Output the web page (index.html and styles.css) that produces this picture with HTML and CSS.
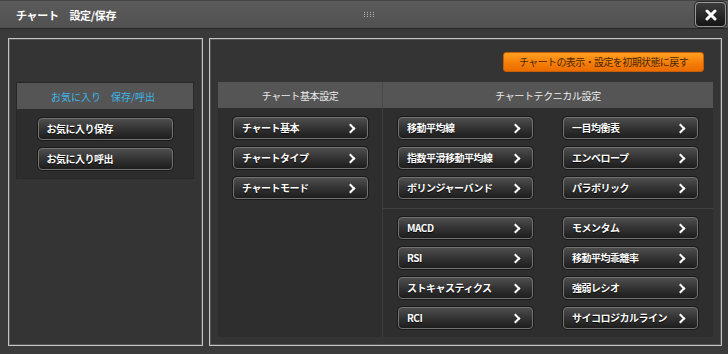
FILE: index.html
```html
<!DOCTYPE html>
<html>
  <head>
    <link rel="stylesheet" href="styles.css">
  </head>
  <body>
    <div class="window">
      <div class="titlebar">
        <h1 class="title">チャート　設定/保存</h1>
        <svg class="grip" width="10" height="6" viewBox="0 0 10 6">
          <g fill="#b5b5b5">
            <rect x="0" y="0" width="1" height="1"/><rect x="3" y="0" width="1" height="1"/><rect x="6" y="0" width="1" height="1"/><rect x="9" y="0" width="1" height="1"/>
            <rect x="0" y="2" width="1" height="1"/><rect x="3" y="2" width="1" height="1"/><rect x="6" y="2" width="1" height="1"/><rect x="9" y="2" width="1" height="1"/>
            <rect x="0" y="4" width="1" height="1"/><rect x="3" y="4" width="1" height="1"/><rect x="6" y="4" width="1" height="1"/><rect x="9" y="4" width="1" height="1"/>
          </g>
        </svg>
        <button type="button" class="close" aria-label="close">
          <svg width="12" height="12" viewBox="0 0 12 12">
            <path d="M2 2 L10 10 M10 2 L2 10" stroke="#fff" stroke-width="3" stroke-linecap="round"/>
          </svg>
        </button>
      </div>

      <div class="content">
        <section class="panel panel-left">
          <div class="fav-box">
            <div class="fav-head">お気に入り　保存/呼出</div>
            <div class="fav-body">
              <button type="button" class="btn">お気に入り保存</button>
              <button type="button" class="btn">お気に入り呼出</button>
            </div>
          </div>
        </section>

        <section class="panel panel-right">
          <div class="reset-row">
            <button type="button" class="reset">チャートの表示・設定を初期状態に戻す</button>
          </div>

          <div class="table">
            <div class="col col-basic">
              <div class="col-head">チャート基本設定</div>
              <div class="group">
                <button type="button" class="btn arrow">チャート基本</button>
                <button type="button" class="btn arrow">チャートタイプ</button>
                <button type="button" class="btn arrow">チャートモード</button>
              </div>
            </div>
            <div class="col col-tech">
              <div class="col-head">チャートテクニカル設定</div>
              <div class="group grid">
                <button type="button" class="btn arrow">移動平均線</button>
                <button type="button" class="btn arrow">一目均衡表</button>
                <button type="button" class="btn arrow">指数平滑移動平均線</button>
                <button type="button" class="btn arrow">エンベロープ</button>
                <button type="button" class="btn arrow">ボリンジャーバンド</button>
                <button type="button" class="btn arrow">パラボリック</button>
              </div>
              <div class="group grid lower">
                <button type="button" class="btn arrow">MACD</button>
                <button type="button" class="btn arrow">モメンタム</button>
                <button type="button" class="btn arrow">RSI</button>
                <button type="button" class="btn arrow">移動平均乖離率</button>
                <button type="button" class="btn arrow">ストキャスティクス</button>
                <button type="button" class="btn arrow">強弱レシオ</button>
                <button type="button" class="btn arrow">RCI</button>
                <button type="button" class="btn arrow">サイコロジカルライン</button>
              </div>
            </div>
          </div>
        </section>
      </div>
    </div>
  </body>
</html>
```

FILE: styles.css
```css
* {
  box-sizing: border-box;
}

body {
  margin: 0;
  font-family: "Noto Sans CJK JP", "Noto Sans", sans-serif;
  background: #3a3a3a;
  color: #fff;
}

.window {
  width: 728px;
  height: 354px;
  background: #3a3a3a;
  display: flex;
  flex-direction: column;
}

.titlebar {
  position: relative;
  height: 29px;
  flex: none;
  display: flex;
  align-items: center;
  justify-content: space-between;
  padding: 0 2px 0 16px;
  background: linear-gradient(#5b5b5b, #515151);
  border-top: 1px solid #444;
  border-bottom: 1px solid #262626;
}

.title {
  margin: 0;
  font-size: 11px;
  font-weight: 700;
  color: #fff;
  letter-spacing: -0.3px;
}

.grip {
  position: absolute;
  left: 364px;
  top: 11px;
}

.close {
  width: 31px;
  height: 25px;
  padding: 0;
  display: flex;
  align-items: center;
  justify-content: center;
  border: 1px solid #9a9a9a;
  border-radius: 4px;
  background: linear-gradient(#3c3c3c, #151515);
  box-shadow: 0 0 0 1px #2a2a2a;
}

.content {
  flex: 1;
  display: flex;
  gap: 6px;
  padding: 9px 6px 8px 8px;
}

.panel {
  border: 1px solid #c4c4c4;
  box-shadow: inset 0 0 0 1px #555;
  background: #343434;
}

.panel-left {
  width: 195px;
  flex: none;
  padding: 43px 8px 0 7px;
}

.panel-right {
  flex: 1;
  padding: 13px 8px 8px 8px;
}

/* favourites */
.fav-box {
  background: #2d2d2d;
  border: 1px solid #282828;
}

.fav-head {
  height: 26px;
  display: flex;
  align-items: center;
  justify-content: center;
  background: #555;
  color: #3cb6e8;
  font-size: 10px;
  padding-right: 4px;
}

.fav-body {
  display: flex;
  flex-direction: column;
  align-items: center;
  gap: 8px;
  padding: 9px 0 8px;
}

/* buttons */
.btn {
  position: relative;
  width: 135px;
  height: 22px;
  padding: 0 0 1px 8px;
  text-align: left;
  font-family: inherit;
  font-size: 10px;
  font-weight: 700;
  letter-spacing: -0.5px;
  color: #fff;
  text-shadow: 0 1px 1px #000;
  border: 1px solid #727272;
  border-radius: 4px;
  background: linear-gradient(#4e4e4e, #333 50%, #1d1d1d);
  box-shadow: 0 0 0 1px #1a1a1a;
}

.arrow::after {
  content: "";
  position: absolute;
  right: 13px;
  top: 7px;
  width: 5px;
  height: 5px;
  border-top: 2px solid #fff;
  border-right: 2px solid #fff;
  transform: rotate(45deg);
}

.reset-row {
  display: flex;
  justify-content: flex-end;
  padding-right: 9px;
  margin-bottom: 10px;
}

.reset {
  width: 201px;
  height: 20px;
  padding: 0 0 1px;
  font-family: inherit;
  font-size: 10px;
  letter-spacing: -0.6px;
  color: #4a2600;
  border: 1px solid #c85e00;
  border-radius: 3px;
  background: linear-gradient(#ffa022, #f57c05 60%, #ea6c00);
}

/* table */
.table {
  display: flex;
  height: 255px;
  background: #2e2e2e;
}

.col-head {
  height: 26px;
  display: flex;
  align-items: center;
  justify-content: center;
  background: #555;
  font-size: 10px;
  color: #ececec;
  letter-spacing: -0.4px;
}

.col-basic {
  width: 165px;
  border-right: 1px solid #3e3e3e;
}

.col-basic .col-head {
  border-right: 1px solid #4a4a4a;
  margin-right: -1px;
}

.col-tech {
  flex: 1;
}

.group {
  display: flex;
  flex-direction: column;
  gap: 8px;
  padding: 9px 0 9px 15px;
}

.grid {
  display: grid;
  grid-template-columns: 135px 135px;
  column-gap: 30px;
}

.lower {
  border-top: 1px solid #404040;
  padding-top: 8px;
}
```
